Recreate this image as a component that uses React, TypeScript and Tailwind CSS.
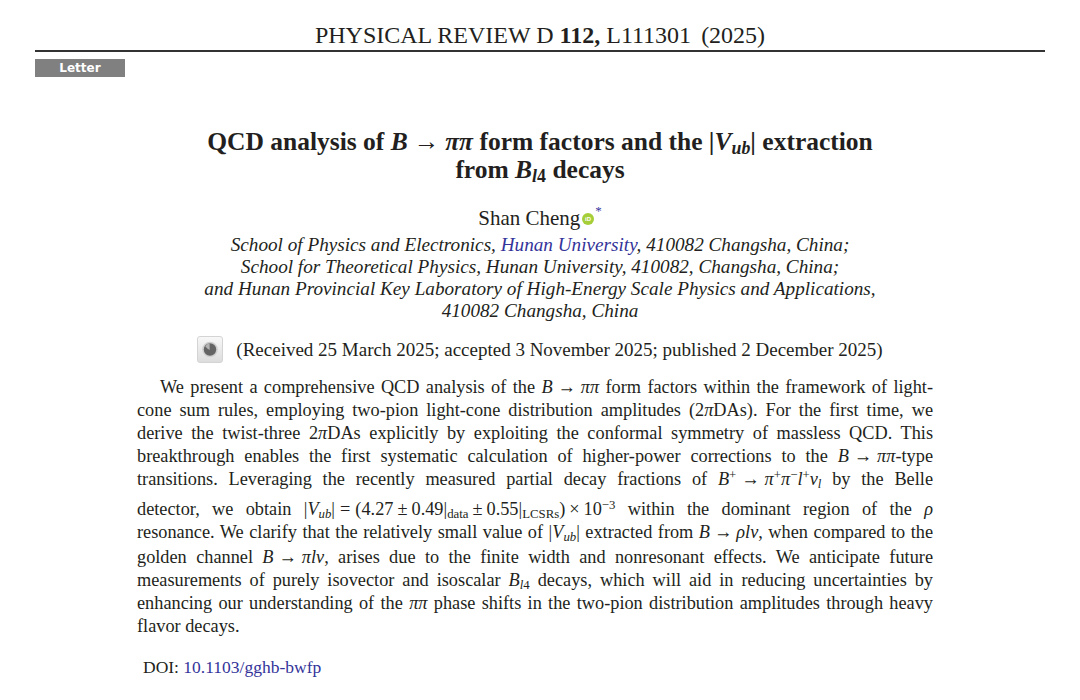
import React from "react";

const Sub = ({ children }: { children: React.ReactNode }) => (
  <span className="text-[0.7em] align-[-0.25em] leading-none">{children}</span>
);
const Sup = ({ children }: { children: React.ReactNode }) => (
  <span className="text-[0.7em] align-[0.5em] leading-none">{children}</span>
);
const I = ({ children }: { children: React.ReactNode }) => <span className="italic">{children}</span>;

function Line({ children, last, extra }: { children: React.ReactNode; last?: boolean; extra?: string }) {
  return (
    <div
      className={`h-[23px] whitespace-nowrap ${last ? "text-left" : "text-justify [text-align-last:justify]"} ${extra ?? ""}`}
    >
      {children}
    </div>
  );
}

function CrossMark() {
  return (
    <svg width="26" height="27" viewBox="0 0 26 27">
      <defs>
        <linearGradient id="cmg" x1="0" y1="0" x2="0" y2="1">
          <stop offset="0" stopColor="#f8f8f8" />
          <stop offset="1" stopColor="#dcdcdc" />
        </linearGradient>
      </defs>
      <rect x="0.5" y="0.5" width="25" height="26" rx="2.5" fill="url(#cmg)" stroke="#d4d4d4" />
      <circle cx="13" cy="13.5" r="7.8" fill="#cfcfcf" />
      <circle cx="13" cy="13.5" r="6.2" fill="#646464" />
      <path d="M8.2 10.2 A6.2 6.2 0 0 1 12.6 7.3 L12.6 14 L10.4 12.4 Z" fill="#b4b4b4" />
    </svg>
  );
}

function Orcid() {
  return (
    <svg width="12" height="12" viewBox="0 0 22 22">
      <circle cx="11" cy="11" r="11" fill="#a6ce39" />
      <text
        x="11"
        y="15"
        textAnchor="middle"
        fontSize="11"
        fontFamily="Liberation Sans, sans-serif"
        fontWeight="bold"
        fill="#ffffff"
      >
        iD
      </text>
    </svg>
  );
}

export default function App() {
  return (
    <div className="w-[1080px] h-[700px] overflow-hidden bg-white text-[#231f20] font-['Liberation_Serif','Times_New_Roman',serif]">
      {/* running head */}
      <div className="pt-[20px] h-[50px] text-center text-[24px] leading-[30px]">
        PHYSICAL REVIEW D <span className="font-bold">112,</span> L111301 <span className="ml-[4px]">(2025)</span>
      </div>
      <div className="mx-[35px] h-[2px] bg-[#333333]" />
      <div className="ml-[35px] mt-[7px] w-[90px] h-[18px] bg-[#808080] flex items-center justify-center text-white font-bold text-[12px] leading-none font-['DejaVu_Sans',sans-serif]">
        Letter
      </div>

      {/* title */}
      <div className="mt-[51px] text-center font-bold text-[25.5px] leading-[28px]">
        <div className="h-[28px]">
          QCD analysis of <I>B</I>
          <span className="mx-[6px] font-normal">→</span>
          <I>ππ</I> form factors and the |<I>V</I>
          <Sub>
            <I>ub</I>
          </Sub>
          | extraction
        </div>
        <div className="h-[28px]">
          from <I>B</I>
          <Sub>
            <I>l</I>4
          </Sub>{" "}
          decays
        </div>
      </div>

      {/* author */}
      <div className="mt-[21px] h-[26px] flex justify-center items-start text-[21px] leading-[26px]">
        <span>Shan Cheng</span>
        <span className="ml-[2px] mt-[8px] flex">
          <Orcid />
        </span>
        <span className="ml-[1px] -mt-[1px] text-[13px] leading-none text-[#3a3a9e]">*</span>
      </div>

      {/* affiliations */}
      <div className="mt-[3px] text-center italic text-[19.2px] leading-[22px]">
        <div>
          School of Physics and Electronics, <span className="text-[#33339a]">Hunan University</span>, 410082 Changsha,
          China;
        </div>
        <div>School for Theoretical Physics, Hunan University, 410082, Changsha, China;</div>
        <div>and Hunan Provincial Key Laboratory of High-Energy Scale Physics and Applications,</div>
        <div>410082 Changsha, China</div>
      </div>

      {/* received */}
      <div className="mt-[14px] h-[27px] flex justify-center items-center gap-[13px]">
        <CrossMark />
        <span className="text-[19px] leading-[22px]">
          (Received 25 March 2025; accepted 3 November 2025; published 2 December 2025)
        </span>
      </div>

      {/* abstract */}
      <div className="mt-[13px] ml-[137px] w-[796px] text-[18.3px] leading-[23px]">
        <Line extra="pl-[23px]">
          We present a comprehensive QCD analysis of the <I>B</I>
          <span className="mx-[5px]">→</span>
          <I>ππ</I> form factors within the framework of light-
        </Line>
        <Line>
          cone sum rules, employing two-pion light-cone distribution amplitudes (2<I>π</I>DAs). For the first time, we
        </Line>
        <Line>
          derive the twist-three 2<I>π</I>DAs explicitly by exploiting the conformal symmetry of massless QCD. This
        </Line>
        <Line>
          breakthrough enables the first systematic calculation of higher-power corrections to the <I>B</I>
          <span className="mx-[5px]">→</span>
          <I>ππ</I>-type
        </Line>
        <Line>
          transitions. Leveraging the recently measured partial decay fractions of <I>B</I>
          <Sup>+</Sup>
          <span className="mx-[5px]">→</span>
          <I>π</I>
          <Sup>+</Sup>
          <I>π</I>
          <Sup>−</Sup>
          <I>l</I>
          <Sup>+</Sup>
          <I>ν</I>
          <Sub>
            <I>l</I>
          </Sub>{" "}
          by the Belle
        </Line>
        <Line extra="mt-[7px]">
          detector, we obtain |<I>V</I>
          <Sub>
            <I>ub</I>
          </Sub>
          |<span className="mx-[5px]">=</span>(4.27<span className="mx-[4px]">±</span>0.49|<Sub>data</Sub>
          <span className="mx-[4px]">±</span>0.55|<Sub>LCSRs</Sub>)<span className="mx-[4px]">×</span>10
          <Sup>−3</Sup> within the dominant region of the <I>ρ</I>
        </Line>
        <Line extra="[word-spacing:-2px]">
          resonance. We clarify that the relatively small value of |<I>V</I>
          <Sub>
            <I>ub</I>
          </Sub>
          | extracted from <I>B</I>
          <span className="mx-[4px]">→</span>
          <I>ρlν</I>, when compared to the
        </Line>
        <Line extra="mt-[2px]">
          golden channel <I>B</I>
          <span className="mx-[5px]">→</span>
          <I>πlν</I>, arises due to the finite width and nonresonant effects. We anticipate future
        </Line>
        <Line>
          measurements of purely isovector and isoscalar <I>B</I>
          <Sub>
            <I>l</I>4
          </Sub>{" "}
          decays, which will aid in reducing uncertainties by
        </Line>
        <Line>
          enhancing our understanding of the <I>ππ</I> phase shifts in the two-pion distribution amplitudes through heavy
        </Line>
        <Line last>flavor decays.</Line>
      </div>

      {/* doi */}
      <div className="mt-[18px] ml-[143px] text-[17.5px] leading-[22px]">
        DOI: <span className="text-[#33339a]">10.1103/gghb-bwfp</span>
      </div>
    </div>
  );
}
